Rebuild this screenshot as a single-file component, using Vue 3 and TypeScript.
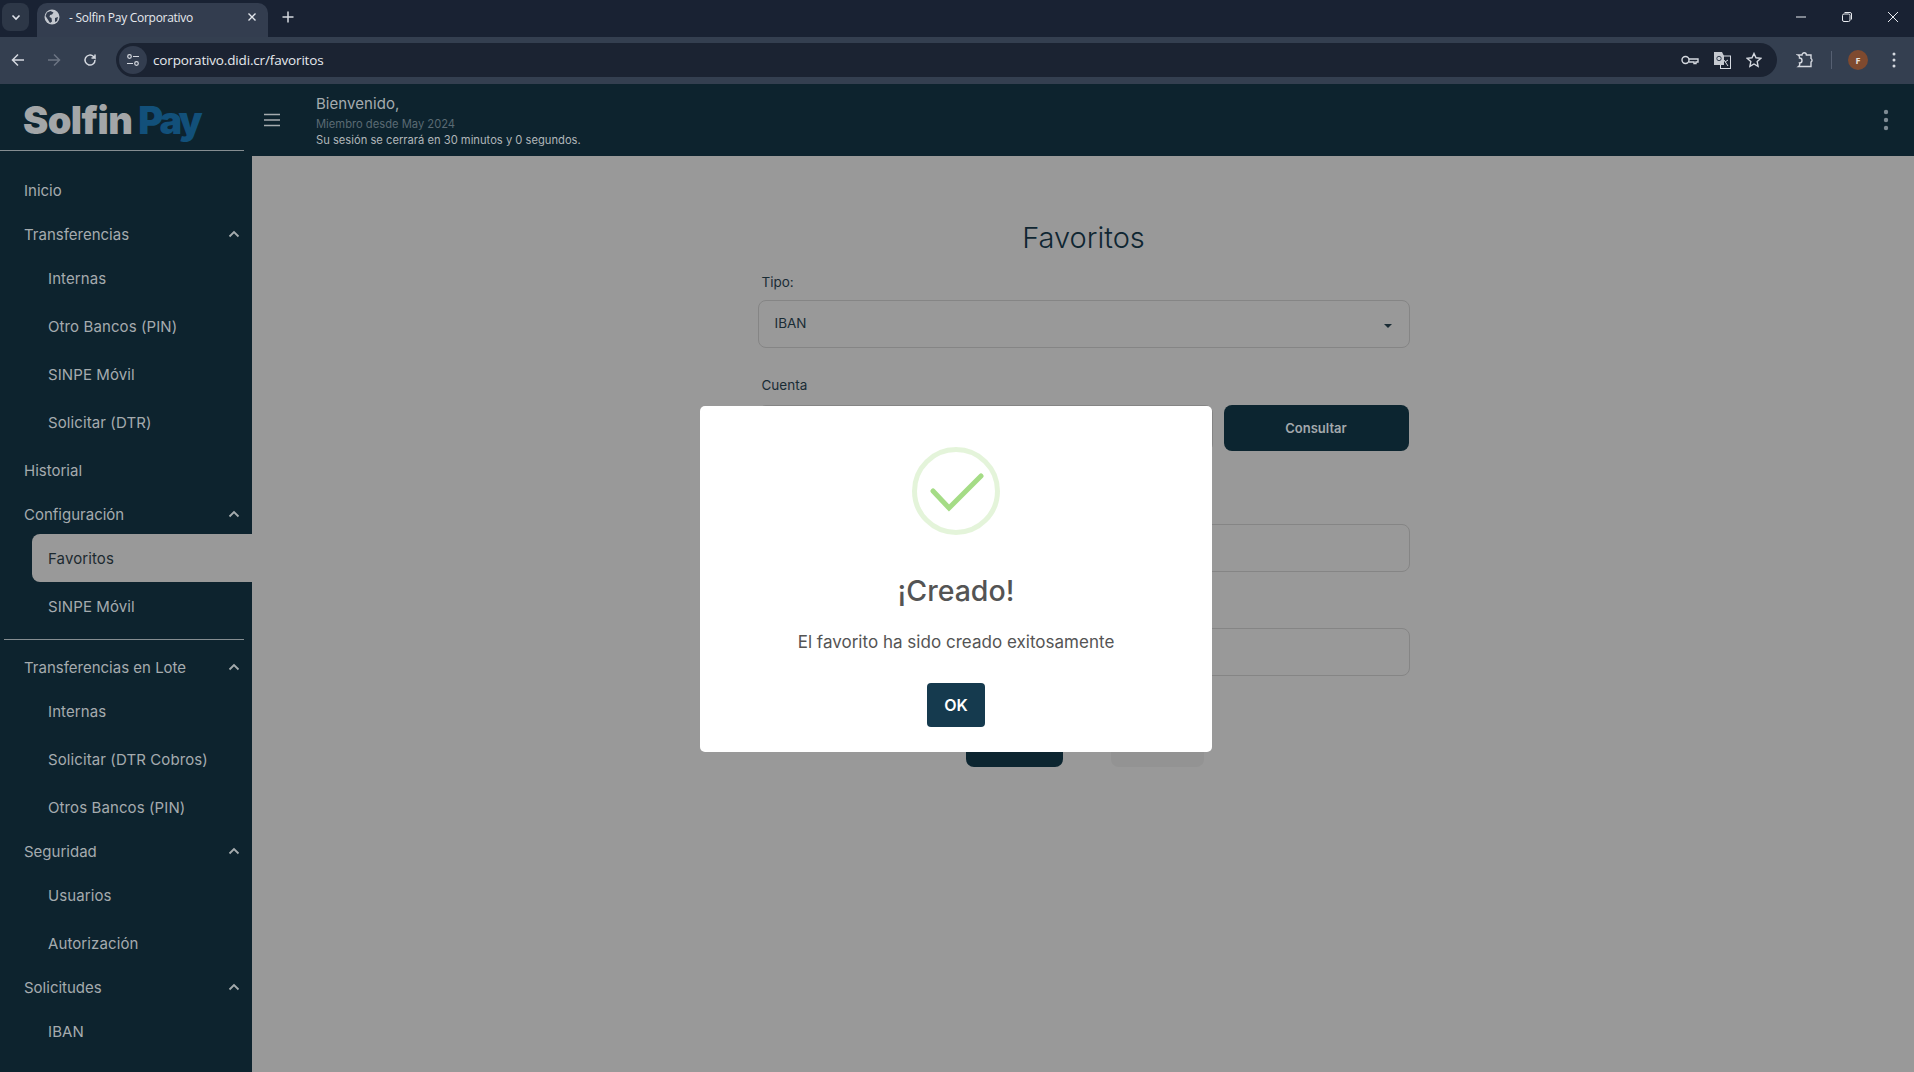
<script setup lang="ts">
interface NavGroup {
  label: string
  open?: boolean
  children?: { label: string; active?: boolean }[]
  divider?: boolean
}
const nav: NavGroup[] = [
  { label: 'Inicio' },
  {
    label: 'Transferencias',
    open: true,
    children: [{ label: 'Internas' }, { label: 'Otro Bancos (PIN)' }, { label: 'SINPE Móvil' }, { label: 'Solicitar (DTR)' }],
  },
  { label: 'Historial' },
  {
    label: 'Configuración',
    open: true,
    divider: true,
    children: [{ label: 'Favoritos', active: true }, { label: 'SINPE Móvil' }],
  },
  {
    label: 'Transferencias en Lote',
    open: true,
    children: [{ label: 'Internas' }, { label: 'Solicitar (DTR Cobros)' }, { label: 'Otros Bancos (PIN)' }],
  },
  { label: 'Seguridad', open: true, children: [{ label: 'Usuarios' }, { label: 'Autorización' }] },
  { label: 'Solicitudes', open: true, children: [{ label: 'IBAN' }] },
]
</script>

<template>
  <div class="window">
    <div class="tabstrip">
      <div class="tab-search">
        <svg width="12" height="12" viewBox="0 0 12 12"><path d="M2.5 4.5 6 8l3.5-3.5" fill="none" stroke="#dfe3ea" stroke-width="1.6" /></svg>
      </div>
      <div class="tab">
        <svg class="favicon" width="16" height="16" viewBox="0 0 16 16">
          <circle cx="8" cy="8" r="7.5" fill="#c4c8cf" />
          <path d="M3 3.5 6.5 2l3 1.5-1.5 2-2 .5-.5 2 2 1 .5 3.5-2 1.500L3.500 10 1.500 7zM11 9l3-1-1 4-2 1z" fill="#333d4f" />
        </svg>
        <span class="tab-title">- Solfin Pay Corporativo</span>
        <svg class="tab-x" width="10" height="10" viewBox="0 0 10 10"><path d="m1.500 1.500 7 7m0-7-7 7" stroke="#e3e6ec" stroke-width="1.400" /></svg>
      </div>
      <svg class="new-tab" width="12" height="12" viewBox="0 0 12 12"><path d="M6 .5v11M.5 6h11" stroke="#d5d9e0" stroke-width="1.500" /></svg>
      <div class="win-controls">
        <svg width="12" height="12" viewBox="0 0 12 12"><path d="M1 6h10" stroke="#e8ebf0" /></svg>
        <svg width="12" height="12" viewBox="0 0 12 12"><rect x="1.500" y="3" width="7.500" height="7.500" rx="1.500" fill="none" stroke="#e8ebf0" /><path d="M3.500 1.500h5.500a1.500 1.500 0 0 1 1.500 1.500v5.500" fill="none" stroke="#e8ebf0" /></svg>
        <svg width="12" height="12" viewBox="0 0 12 12"><path d="m1 1 10 10m0-10L1 11" stroke="#e8ebf0" /></svg>
      </div>
    </div>

    <div class="toolbar">
      <div class="nav-btns">
        <svg width="16" height="16" viewBox="0 0 16 16"><path d="M14 8H3m5-5.500L2.500 8 8 13.500" fill="none" stroke="#d5d9e0" stroke-width="1.500" /></svg>
        <svg width="16" height="16" viewBox="0 0 16 16"><path d="M2 8h11M8 2.500 13.500 8 8 13.500" fill="none" stroke="#6c7583" stroke-width="1.500" /></svg>
        <svg width="16" height="16" viewBox="0 0 16 16"><path d="M13 8a5 5 0 1 1-1.500-3.500L13 6V2.500M13 6H9.500" fill="none" stroke="#d5d9e0" stroke-width="1.500" /></svg>
      </div>
      <div class="omnibox">
        <div class="site-chip">
          <svg width="14" height="14" viewBox="0 0 14 14" fill="none" stroke="#d5d9e0" stroke-width="1.200">
            <circle cx="3.500" cy="3.500" r="1.800" /><path d="M7 3.500h6M1 10.500h6" /><circle cx="10.500" cy="10.500" r="1.800" />
          </svg>
        </div>
        <span class="url">corporativo.didi.cr/favoritos</span>
        <div class="omni-icons">
          <svg width="18" height="12" viewBox="0 0 18 12" fill="none" stroke="#d5d9e0" stroke-width="1.400"><circle cx="4.500" cy="6" r="3.500" /><path d="M8 5h9v3h-2v1.500h-2V8h-5" /></svg>
          <svg width="17" height="17" viewBox="0 0 17 17">
            <rect x="6.500" y="4" width="10" height="12.500" fill="none" stroke="#d5d9e0" />
            <path d="M0 0h8l2 4v9H0z" fill="#c6cad1" />
            <circle cx="5" cy="6.500" r="2.200" fill="none" stroke="#333d4f" />
            <path d="m10 8 4 6m0-6-3 2" stroke="#d5d9e0" fill="none" />
          </svg>
          <svg width="16" height="16" viewBox="0 0 16 16"><path d="m8 1.500 2 4.300 4.700.6-3.500 3.200.9 4.700L8 12 3.900 14.300l.9-4.700L1.300 6.400 6 5.800z" fill="none" stroke="#d5d9e0" stroke-width="1.400" /></svg>
        </div>
      </div>
      <div class="tool-right">
        <svg width="18" height="18" viewBox="0 0 18 18"><path d="M2 4h4a2.200 2.200 0 0 1 4.400 0H15v3.500a2 2 0 0 1 0 3.500V15.500H2.500a3 3 0 0 0 1-3.500 2.500 2.500 0 0 0 0-5A3 3 0 0 0 2 4z" fill="none" stroke="#d5d9e0" stroke-width="1.400" /></svg>
        <span class="tool-sep"></span>
        <span class="avatar">F</span>
        <svg width="4" height="16" viewBox="0 0 4 16" fill="#d5d9e0"><circle cx="2" cy="2" r="1.500" /><circle cx="2" cy="8" r="1.500" /><circle cx="2" cy="14" r="1.500" /></svg>
      </div>
    </div>

    <div class="app">
      <aside class="sidebar">
        <div class="brand"><span class="solfin">Solfin</span><span class="pay">Pay</span></div>
        <nav class="menu">
          <template v-for="g in nav" :key="g.label">
            <div class="top-item" :class="{ leaf: !g.children }">
              <span>{{ g.label }}</span>
              <svg v-if="g.open" width="12" height="8" viewBox="0 0 12 8"><path d="M1.500 6.500 6 2l4.500 4.500" fill="none" stroke="#a5abae" stroke-width="1.800" /></svg>
            </div>
            <div
              v-for="c in g.children"
              :key="g.label + c.label"
              class="sub-item"
              :class="{ active: c.active }"
            >
              {{ c.label }}
            </div>
            <div v-if="g.divider" class="menu-divider"></div>
          </template>
        </nav>
      </aside>

      <div class="content">
        <header class="topbar">
          <svg class="burger" width="16" height="14" viewBox="0 0 16 14"><path d="M0 1.500h16M0 7h16M0 12.500h16" stroke="#a5abae" stroke-width="1.600" /></svg>
          <div class="welcome">
            <div class="hello">Bienvenido,</div>
            <div class="since">Miembro desde May 2024</div>
            <div class="session">Su sesión se cerrará en 30 minutos y 0 segundos.</div>
          </div>
          <svg class="kebab" width="6" height="22" viewBox="0 0 6 22" fill="#7f8c94"><circle cx="3" cy="3" r="2.200" /><circle cx="3" cy="11" r="2.200" /><circle cx="3" cy="19" r="2.200" /></svg>
        </header>

        <main class="main">
          <div class="form">
            <h1 class="title">Favoritos</h1>
            <label class="label label-first">Tipo:</label>
            <div class="control select">
              <span>IBAN</span>
              <span class="caret"></span>
            </div>
            <label class="label label-second">Cuenta</label>
            <div class="account-row">
              <div class="control account"></div>
              <div class="btn-consult">Consultar</div>
            </div>
            <div class="control third"></div>
            <div class="control fourth"></div>
            <div class="actions">
              <div class="btn-save"></div>
              <div class="btn-cancel"></div>
            </div>
          </div>
        </main>
      </div>
    </div>

    <div class="backdrop">
      <div class="modal" role="dialog">
        <svg class="success" width="88" height="88" viewBox="0 0 88 88">
          <circle cx="44" cy="44" r="41.500" fill="none" stroke="#a5dc86" stroke-opacity="0.300" stroke-width="5" />
          <path d="M21 44 37 61 69 29" fill="none" stroke="#a5dc86" stroke-width="5" stroke-linecap="round" />
        </svg>
        <h2 class="modal-title">¡Creado!</h2>
        <p class="modal-text">El favorito ha sido creado exitosamente</p>
        <button class="modal-ok" type="button">OK</button>
      </div>
    </div>
  </div>
</template>

<style>
html, body { margin: 0; background: #999; overflow: hidden; }
</style>

<style scoped>
.window {
  position: relative;
  width: 1914px;
  height: 1072px;
  overflow: hidden;
  display: flex;
  flex-direction: column;
  font-family: Inter, "Noto Sans", sans-serif;
  background: #999;
}
.tabstrip {
  height: 37px;
  flex: none;
  background: #192233;
  display: flex;
  align-items: flex-start;
  position: relative;
  font-family: "Open Sans", "Noto Sans", sans-serif;
}
.tab-search {
  margin: 3px 0 0 2px;
  width: 27px;
  height: 28px;
  border-radius: 8px;
  background: #2d3747;
  display: flex;
  align-items: center;
  justify-content: center;
}
.tab {
  margin: 3px 0 0 8px;
  width: 231px;
  height: 34px;
  border-radius: 10px 10px 0 0;
  background: #333d4f;
  display: flex;
  align-items: center;
  padding: 0 11px 6px 7px;
  box-sizing: border-box;
  color: #e6e9ee;
  font-size: 12px;
}
.favicon { margin-right: 9px; flex: none; }
.tab-title { flex: 1; white-space: nowrap; letter-spacing: -0.28px; }
.tab-x { flex: none; }
.new-tab { margin: 11px 0 0 14px; }
.win-controls {
  margin-left: auto;
  display: flex;
  gap: 34px;
  padding: 11px 15px 0 0;
}
.toolbar {
  height: 47px;
  flex: none;
  box-sizing: border-box;
  padding-bottom: 1px;
  background: #343f50;
  display: flex;
  align-items: center;
  font-family: "Open Sans", "Noto Sans", sans-serif;
}
.nav-btns {
  width: 116px;
  flex: none;
  display: flex;
  gap: 20px;
  padding-left: 10px;
  box-sizing: border-box;
}
.omnibox {
  width: 1661px;
  height: 34px;
  flex: none;
  border-radius: 17px;
  background: #1b2332;
  display: flex;
  align-items: center;
  padding: 0 15px 0 3px;
  box-sizing: border-box;
}
.site-chip {
  width: 28px;
  height: 28px;
  border-radius: 50%;
  background: #333d4f;
  display: flex;
  align-items: center;
  justify-content: center;
  flex: none;
}
.url {
  margin-left: 6px;
  color: #e6e9ee;
  font-size: 13.500px;
  letter-spacing: -0.16px;
}
.omni-icons {
  margin-left: auto;
  display: flex;
  align-items: center;
  gap: 15px;
}
.tool-right {
  flex: 1;
  display: flex;
  align-items: center;
  padding-left: 19px;
}
.tool-sep { width: 1px; height: 18px; background: #566072; margin: 0 16px 0 17px; }
.avatar {
  width: 20px;
  height: 20px;
  border-radius: 50%;
  background: #7f4a2f;
  color: #e8e2dc;
  font-size: 9px;
  font-weight: 700;
  display: flex;
  align-items: center;
  justify-content: center;
  margin-right: 24px;
}
.app { flex: 1; display: flex; min-height: 0; }
.sidebar {
  width: 252px;
  flex: none;
  background: #0d232e;
  color: #a5abae;
  overflow: hidden;
}
.brand {
  width: 244px;
  height: 67px;
  box-sizing: border-box;
  border-bottom: 1px solid #858d91;
  padding: 13px 0 0 23px;
  font-family: Inter, sans-serif;
  font-weight: 900;
  font-size: 38px;
  line-height: 46px;
  white-space: nowrap;
}
.solfin { color: #a3a6a8; margin-right: 6px; letter-spacing: -0.6px; }
.pay { color: #12507a; letter-spacing: -2.8px; }
.menu { padding-top: 15px; font-size: 15px; }
.top-item {
  height: 40px;
  padding: 0 12px 0 24px;
  display: flex;
  align-items: center;
  justify-content: space-between;
}
.top-item.leaf { height: 48px; }
.sub-item {
  height: 48px;
  margin-left: 32px;
  padding-left: 16px;
  display: flex;
  align-items: center;
  border-radius: 8px 0 0 8px;
  letter-spacing: 0.1px;
}
.sub-item.active { background: #999; color: #1d2a30; }
.menu-divider {
  width: 240px;
  height: 1px;
  margin: 9px 0 7px 4px;
  background: #858d91;
}
.content { flex: 1; min-width: 0; display: flex; flex-direction: column; }
.topbar {
  height: 72px;
  flex: none;
  box-sizing: border-box;
  background: #0d232e;
  display: flex;
  align-items: center;
  padding: 0 25px 0 12px;
  color: #a5abae;
}
.burger { flex: none; }
.welcome { margin-left: 36px; flex: 1; padding-top: 2px; }
.hello { font-size: 15px; line-height: 20px; margin-bottom: 2px; letter-spacing: 0.06px; }
.since { font-size: 11.200px; line-height: 16px; color: #5a6a73; }
.session { font-size: 11.200px; line-height: 16px; color: #b0b6b9; }
.main { flex: 1; display: flex; justify-content: center; padding-left: 1px; }
.form { width: 652px; padding-top: 64px; color: #1a2c35; }
.title {
  margin: 0;
  text-align: center;
  font-size: 29px;
  line-height: 36px;
  font-weight: 300;
  color: #0f2632;
}
.label { display: block; font-size: 13.500px; line-height: 18px; margin-left: 4px; }
.label-first { margin-top: 17px; margin-bottom: 9px; }
.label-second { margin-top: 28px; margin-bottom: 11px; }
.control {
  height: 48px;
  box-sizing: border-box;
  border: 1px solid #858585;
  border-radius: 8px;
}
.select {
  display: flex;
  align-items: center;
  justify-content: space-between;
  padding: 0 17px 2px 16px;
  font-size: 13.500px;
}
.caret {
  width: 0;
  height: 0;
  border-left: 4px solid transparent;
  border-right: 4px solid transparent;
  border-top: 4px solid #1a2c35;
  margin-top: 5px;
}
.account-row { display: flex; gap: 11px; }
.account { flex: 1; height: 47px; }
.btn-consult {
  width: 185px;
  margin-right: 1px;
  height: 46px;
  border-radius: 8px;
  background: #0c2530;
  color: #a3a9ac;
  font-size: 13px;
  font-weight: 600;
  display: flex;
  align-items: center;
  justify-content: center;
}
.third { margin-top: 72px; }
.fourth { margin-top: 56px; }
.actions { margin-top: 45px; display: flex; padding-left: 208px; gap: 48px; }
.btn-save { width: 97px; height: 46px; border-radius: 8px; background: #0c2530; }
.btn-cancel { width: 93px; height: 46px; border-radius: 8px; background: #939393; }
.backdrop {
  position: absolute;
  left: 0;
  right: 2px;
  top: 86px;
  bottom: 0;
  display: flex;
  align-items: center;
  justify-content: center;
}
.modal {
  width: 512px;
  height: 346px;
  box-sizing: border-box;
  background: #fff;
  border-radius: 5px;
  padding-top: 41px;
  display: flex;
  flex-direction: column;
  align-items: center;
  color: #545454;
}
.success { flex: none; }
.modal-title { margin: 38px 0 0; font-size: 28.500px; line-height: 36px; font-weight: 500; }
.modal-text { margin: 21px 0 0; font-size: 17px; line-height: 24px; letter-spacing: 0.02px; }
.modal-ok {
  margin-top: 29px;
  width: 58px;
  height: 44px;
  border: 0;
  border-radius: 4px;
  background: #153a4e;
  color: #fff;
  font: 600 16px Inter, sans-serif;
}
</style>
